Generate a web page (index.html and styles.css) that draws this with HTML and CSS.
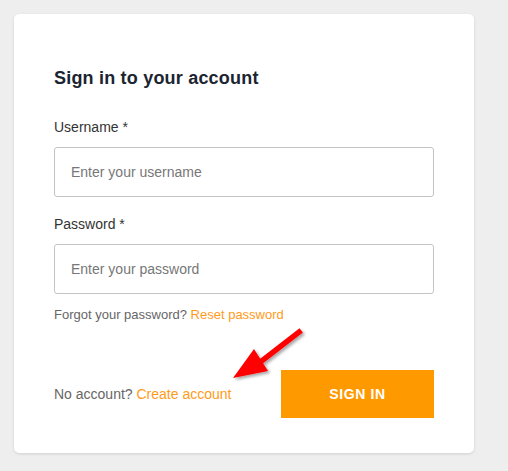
FILE: index.html
```html
<!DOCTYPE html>
<html>
<head>
<meta charset="utf-8">
<link rel="stylesheet" href="styles.css">
</head>
<body>
<div class="card">
  <h1 class="title">Sign in to your account</h1>
  <label class="label" for="u">Username *</label>
  <input class="input" id="u" type="text" placeholder="Enter your username">
  <label class="label label-pw" for="p">Password *</label>
  <input class="input" id="p" type="password" placeholder="Enter your password">
  <p class="hint">Forgot your password? <a class="link" href="#">Reset password</a></p>
  <div class="footer">
    <p class="noacc">No account? <a class="link" href="#">Create account</a></p>
    <button class="btn" type="button">SIGN IN</button>
  </div>
  <svg class="arrow" width="90" height="70" viewBox="0 0 90 70">
    <defs>
      <filter id="sh" x="-20%" y="-20%" width="150%" height="150%">
        <feDropShadow dx="2" dy="2" stdDeviation="1.5" flood-color="#000" flood-opacity="0.35"/>
      </filter>
    </defs>
    <g filter="url(#sh)">
      <line x1="69" y1="4" x2="33" y2="32" stroke="#ff0000" stroke-width="5.5" stroke-linecap="square"/>
      <polygon points="3,50 24,21 38,43" fill="#ff0000"/>
    </g>
  </svg>
</div>
</body>
</html>
```
FILE: styles.css
```css
html, body {
  margin: 0;
  padding: 0;
}
body {
  background: #eeeeee;
  font-family: "Liberation Sans", Arial, sans-serif;
  padding: 14px;
  width: 460px;
}
.card {
  position: relative;
  background: #ffffff;
  border-radius: 5px;
  box-shadow: 0 1px 3px rgba(0, 0, 0, 0.12);
  padding: 53px 40px 35px 40px;
  display: flex;
  flex-direction: column;
}
.title {
  margin: 0 0 29px 0;
  font-size: 18px;
  line-height: 22px;
  font-weight: bold;
  letter-spacing: 0.2px;
  color: #1b2431;
}
.label {
  font-size: 14px;
  line-height: 18px;
  color: #333333;
  margin-bottom: 11px;
}
.label-pw {
  margin-top: 18px;
}
.input {
  box-sizing: border-box;
  width: 380px;
  height: 50px;
  border: 1px solid #c4c4c4;
  border-radius: 3px;
  padding: 0 16px;
  font-family: "Liberation Sans", Arial, sans-serif;
  font-size: 14px;
  color: #333;
  outline: none;
}
.input::placeholder {
  color: #777777;
}
.hint {
  margin: 12px 0 0 0;
  font-size: 13px;
  line-height: 18px;
  color: #666666;
}
.link {
  color: #ff9a1a;
  text-decoration: none;
}
.footer {
  margin-top: 46px;
  display: flex;
  align-items: center;
  justify-content: space-between;
}
.noacc {
  margin: 0;
  font-size: 14px;
  line-height: 18px;
  color: #666666;
}
.btn {
  width: 153px;
  height: 48px;
  border: none;
  background: #ff9900;
  color: #ffffff;
  font-family: "Liberation Sans", Arial, sans-serif;
  font-weight: bold;
  font-size: 14px;
  letter-spacing: 0.6px;
  cursor: pointer;
}
.arrow {
  position: absolute;
  left: 216px;
  top: 314px;
}
```
